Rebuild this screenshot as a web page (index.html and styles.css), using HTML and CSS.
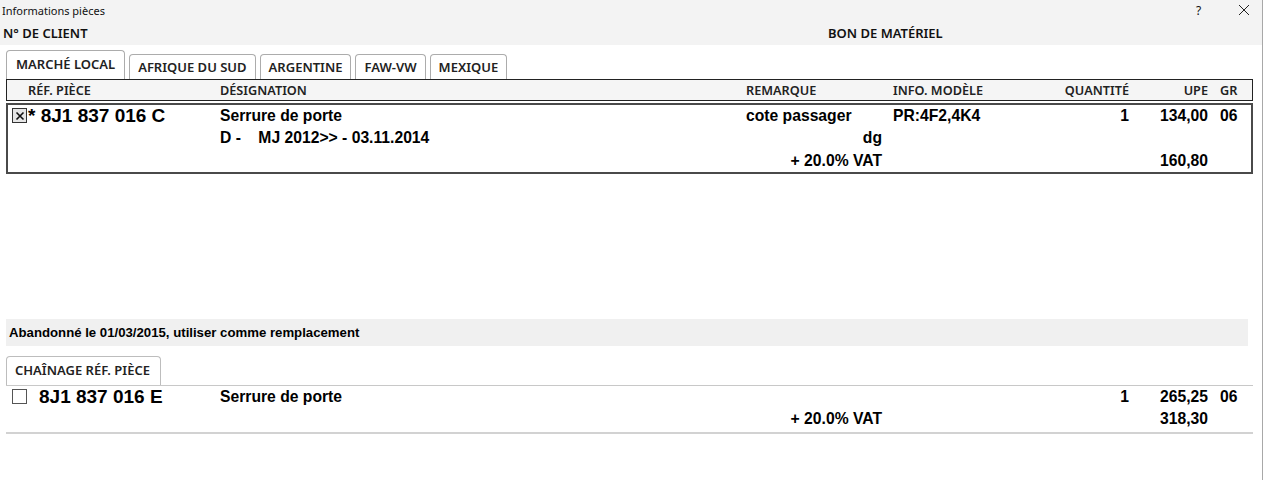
FILE: index.html
```html
<!DOCTYPE html>
<html lang="fr">
<head>
    <meta charset="UTF-8">
    <title>Informations pièces</title>
    <link rel="stylesheet" href="styles.css">
</head>
<body>

<div class="window">
    <div class="titlebar">
        <span class="title">Informations pièces</span>
        <span class="help">?</span>
        <span class="close">
            <svg width="12" height="12" viewBox="0 0 12 12"><path d="M1 1L11 11M11 1L1 11" stroke="#222" stroke-width="1" fill="none"/></svg>
        </span>
    </div>

    <div class="infobar">
        <span>N° DE CLIENT</span>
        <span>BON DE MATÉRIEL</span>
    </div>

    <div class="content">
        <div class="tabs">
            <div class="tab active">MARCHÉ LOCAL</div>
            <div class="tab">AFRIQUE DU SUD</div>
            <div class="tab">ARGENTINE</div>
            <div class="tab">FAW-VW</div>
            <div class="tab">MEXIQUE</div>
        </div>

        <div class="head cols">
            <div class="c-ref">RÉF. PIÈCE</div>
            <div>DÉSIGNATION</div>
            <div>REMARQUE</div>
            <div>INFO. MODÈLE</div>
            <div class="num">QUANTITÉ</div>
            <div class="num">UPE</div>
            <div class="c-gr">GR</div>
        </div>

        <!-- selected part -->
        <div class="part cols">
            <div class="c-ref"><span class="chk checked"><svg width="12" height="12" viewBox="0 0 12 12"><path d="M2.5 2.5L9.5 9.5M9.5 2.5L2.5 9.5" stroke="#111" stroke-width="1.6" fill="none"/></svg></span><span class="ref">* 8J1 837 016 C</span></div>
            <div>Serrure de porte</div>
            <div>cote passager</div>
            <div>PR:4F2,4K4</div>
            <div class="num">1</div>
            <div class="num">134,00</div>
            <div class="c-gr">06</div>

            <div></div>
            <div class="pre">D -    MJ 2012&gt;&gt; - 03.11.2014</div>
            <div class="c-rem">dg</div>
            <div></div>
            <div></div>
            <div></div>
            <div></div>

            <div></div>
            <div></div>
            <div class="c-rem">+ 20.0% VAT</div>
            <div></div>
            <div></div>
            <div class="num">160,80</div>
            <div></div>
        </div>

        <div class="notice">Abandonné le 01/03/2015, utiliser comme remplacement</div>

        <div class="tabs light">
            <div class="tab">CHAÎNAGE RÉF. PIÈCE</div>
        </div>

        <div class="chain cols">
            <div class="c-ref"><span class="chk"></span><span class="ref">8J1 837 016 E</span></div>
            <div>Serrure de porte</div>
            <div></div>
            <div></div>
            <div class="num">1</div>
            <div class="num">265,25</div>
            <div class="c-gr">06</div>

            <div></div>
            <div></div>
            <div class="c-rem">+ 20.0% VAT</div>
            <div></div>
            <div></div>
            <div class="num">318,30</div>
            <div></div>
        </div>
    </div>
</div>

</body>
</html>
```

FILE: styles.css
```css
body {
    margin: 0;
    background: #fff;
    font-family: "Liberation Sans", Arial, sans-serif;
    color: #000;
}

.window {
    width: 1263px;
    height: 480px;
    box-sizing: border-box;
    border-right: 1px solid #a8a8a8;
}

/* top bars */
.titlebar {
    height: 20px;
    display: flex;
    align-items: center;
    padding-left: 2px;
    background: #f3f3f3;
    font-family: "Noto Sans", sans-serif;
    font-size: 11px;
    color: #111;
}

.titlebar .title {
    flex: 1;
}

.titlebar .help {
    width: 42px;
    font-size: 12px;
}

.titlebar .close {
    width: 24px;
    display: flex;
    align-items: center;
}

.infobar {
    height: 25px;
    display: grid;
    grid-template-columns: 825px 1fr;
    align-items: center;
    padding-left: 3px;
    background: #f3f3f3;
    font-family: "Noto Sans", sans-serif;
    font-size: 13px;
    font-weight: 600;
    color: #111;
}

.content {
    padding: 5px 9px 0 6px;
}

/* tabs */
.tabs {
    display: flex;
    align-items: flex-end;
    gap: 4px;
    height: 29px;
}

.tab {
    height: 24px;
    line-height: 24px;
    padding: 0 8px;
    border: 1px solid #acacac;
    border-bottom: none;
    border-radius: 4px 4px 0 0;
    background: #fff;
    font-family: "Noto Sans", sans-serif;
    font-size: 13px;
    font-weight: 600;
    color: #222;
}

.tab.active {
    height: 28px;
    line-height: 26px;
    padding: 0 9px;
}

.tabs.light {
    height: 29px;
    margin-top: 10px;
    border-bottom: 1px solid #c8c8c8;
    align-items: stretch;
}

.tabs.light .tab {
    height: auto;
    line-height: 27px;
    padding: 0 10px 0 8px;
    border-color: #bdbdbd;
}

/* columns shared by header and rows */
.cols {
    display: grid;
    grid-template-columns: 213px 526px 147px 167px 69px 79px 1fr;
}

.num {
    text-align: right;
}

.c-gr {
    padding-left: 12px;
}

.c-rem {
    text-align: right;
    padding-right: 11px;
}

.head {
    height: 20px;
    line-height: 20px;
    border: 1px solid #222;
    background: #f5f5f5;
    font-family: "Noto Sans", sans-serif;
    font-size: 12.7px;
    font-weight: 600;
    color: #222;
}

.head .c-ref {
    padding-left: 21px;
}

.part {
    margin-top: 2px;
    grid-template-columns: 212px 526px 147px 167px 69px 79px 1fr;
    grid-template-rows: 21px 23px 23px;
    border: 2px solid #4a4a4a;
    font-size: 15.7px;
    font-weight: bold;
    line-height: 21px;
}

.part > div,
.chain > div {
    display: flex;
    align-items: center;
}

.part > .num,
.part > .c-rem,
.chain > .num,
.chain > .c-rem {
    justify-content: flex-end;
}

.part .c-ref {
    padding-left: 4px;
}

.pre {
    white-space: pre;
}

.ref {
    font-size: 19px;
    font-weight: bold;
}

.chk {
    width: 13px;
    height: 13px;
    border: 1px solid #555;
    background: #fff;
    display: inline-flex;
    align-items: center;
    justify-content: center;
}

.chk.checked {
    background: #e6e6e6;
    border-color: #333;
    margin-right: 1px;
}

.notice {
    margin-top: 145px;
    margin-right: 5px;
    height: 27px;
    line-height: 27px;
    padding-left: 3px;
    background: #f0f0f0;
    font-size: 13.2px;
    font-weight: bold;
}

.chain {
    grid-template-columns: 214px 526px 147px 167px 69px 79px 1fr;
    grid-template-rows: 21px 23px;
    padding-bottom: 2px;
    border-bottom: 2px solid #d2d2d2;
    font-size: 15.7px;
    font-weight: bold;
    line-height: 21px;
}

.chain .c-ref {
    padding-left: 6px;
}

.chain .chk {
    margin-right: 12px;
}
```
